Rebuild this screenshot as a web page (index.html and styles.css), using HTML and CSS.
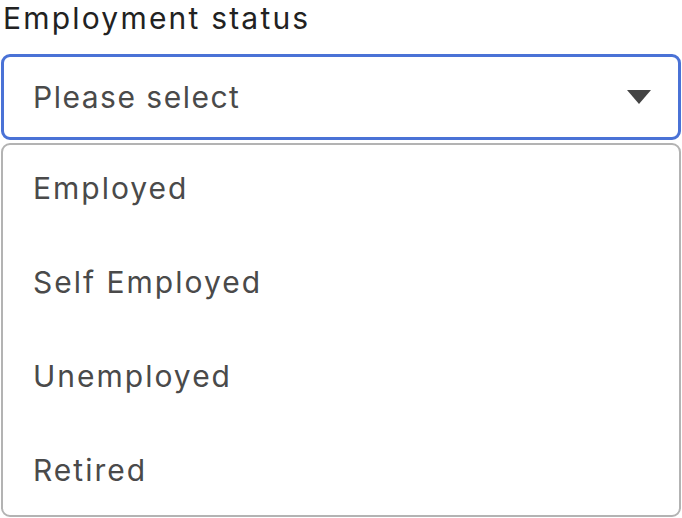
FILE: index.html
```html
<!DOCTYPE html>
<html>
<head>
<meta charset="utf-8">
<link rel="stylesheet" href="styles.css">
</head>
<body>
<div class="field">
  <div class="label">Employment status</div>
  <div class="select">
    <span class="placeholder">Please select</span>
    <svg class="arrow" width="24" height="14" viewBox="0 0 24 14"><polygon points="0,0 24,0 12,14" fill="#444"/></svg>
  </div>
  <ul class="options">
    <li class="option">Employed</li>
    <li class="option">Self Employed</li>
    <li class="option">Unemployed</li>
    <li class="option">Retired</li>
  </ul>
</div>
</body>
</html>
```
FILE: styles.css
```css
html, body {
  margin: 0;
  padding: 0;
  background: #fff;
}
body {
  font-family: Inter, "Open Sans", sans-serif;
  font-size: 30px;
  line-height: 34px;
  letter-spacing: 2px;
}
.field {
  width: 680px;
  padding: 0 1px;
}
.label {
  height: 54px;
  box-sizing: border-box;
  padding: 1px 0 0 2px;
  color: #222;
  letter-spacing: 2.2px;
}
.select {
  height: 86px;
  box-sizing: border-box;
  border: 3px solid #4a72d6;
  border-radius: 9px;
  display: flex;
  align-items: center;
  justify-content: space-between;
  padding: 0 27px 0 29px;
  color: #4a4a4a;
}
.placeholder {
  letter-spacing: 1.5px;
}
.arrow {
  display: block;
}
.options {
  list-style: none;
  margin: 3px 0 0;
  padding: 26px 0 28px 30px;
  border: 2px solid #b3b3b3;
  border-radius: 9px;
  display: flex;
  flex-direction: column;
  gap: 60px;
  color: #4a4a4a;
}
.option {
  height: 34px;
}
```
